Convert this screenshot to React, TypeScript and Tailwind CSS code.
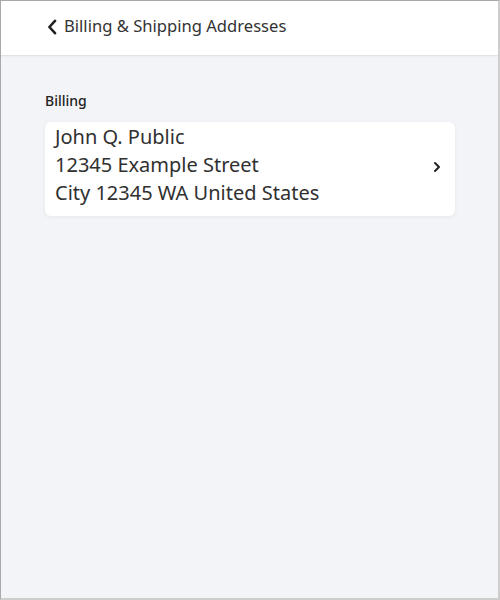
import React from 'react';

const App: React.FC = () => {
  return (
    <div
      className="w-[500px] h-[600px] flex flex-col bg-[#f3f4f8] border-l border-t border-[#a8a8a8] border-r-2 border-b-2 border-r-[#cdcdcd] border-b-[#cdcdcd] overflow-hidden"
      style={{ fontFamily: '"Noto Sans", "Open Sans", sans-serif' }}
    >
      <header className="h-[55px] shrink-0 bg-white border-b border-[#e2e3e6] shadow-[0_1px_2px_rgba(0,0,0,0.04)] flex items-center pl-[46px] pb-[3px]">
        <svg width="10" height="16" viewBox="0 0 10 16" className="shrink-0">
          <path d="M8 1.8 L2.4 8 L8 14.2" fill="none" stroke="#222" strokeWidth="2.6" strokeLinecap="round" strokeLinejoin="round" />
        </svg>
        <span className="ml-[7px] text-[16.6px] text-[#333] leading-none">
          Billing &amp; Shipping Addresses
        </span>
      </header>

      <main className="pl-[44px] pr-[43px] pt-[34px]">
        <h2 className="text-[14px] font-medium text-[#222] mb-[11px]">Billing</h2>
        <div className="bg-white rounded-[6px] shadow-[0_1px_4px_rgba(0,0,0,0.06)] flex items-center pl-[10px] pr-[14px] pt-[1px] pb-[9px]">
          <div className="flex-1 text-[20px] leading-[28px] text-[#303030]">
            <div>John Q. Public</div>
            <div>12345 Example Street</div>
            <div>City 12345 WA United States</div>
          </div>
          <svg width="8" height="12" viewBox="0 0 8 12" className="shrink-0 mt-[4px]">
            <path d="M2 2 L6 6 L2 10" fill="none" stroke="#222" strokeWidth="2" strokeLinecap="round" strokeLinejoin="round" />
          </svg>
        </div>
      </main>
    </div>
  );
};

export default App;
